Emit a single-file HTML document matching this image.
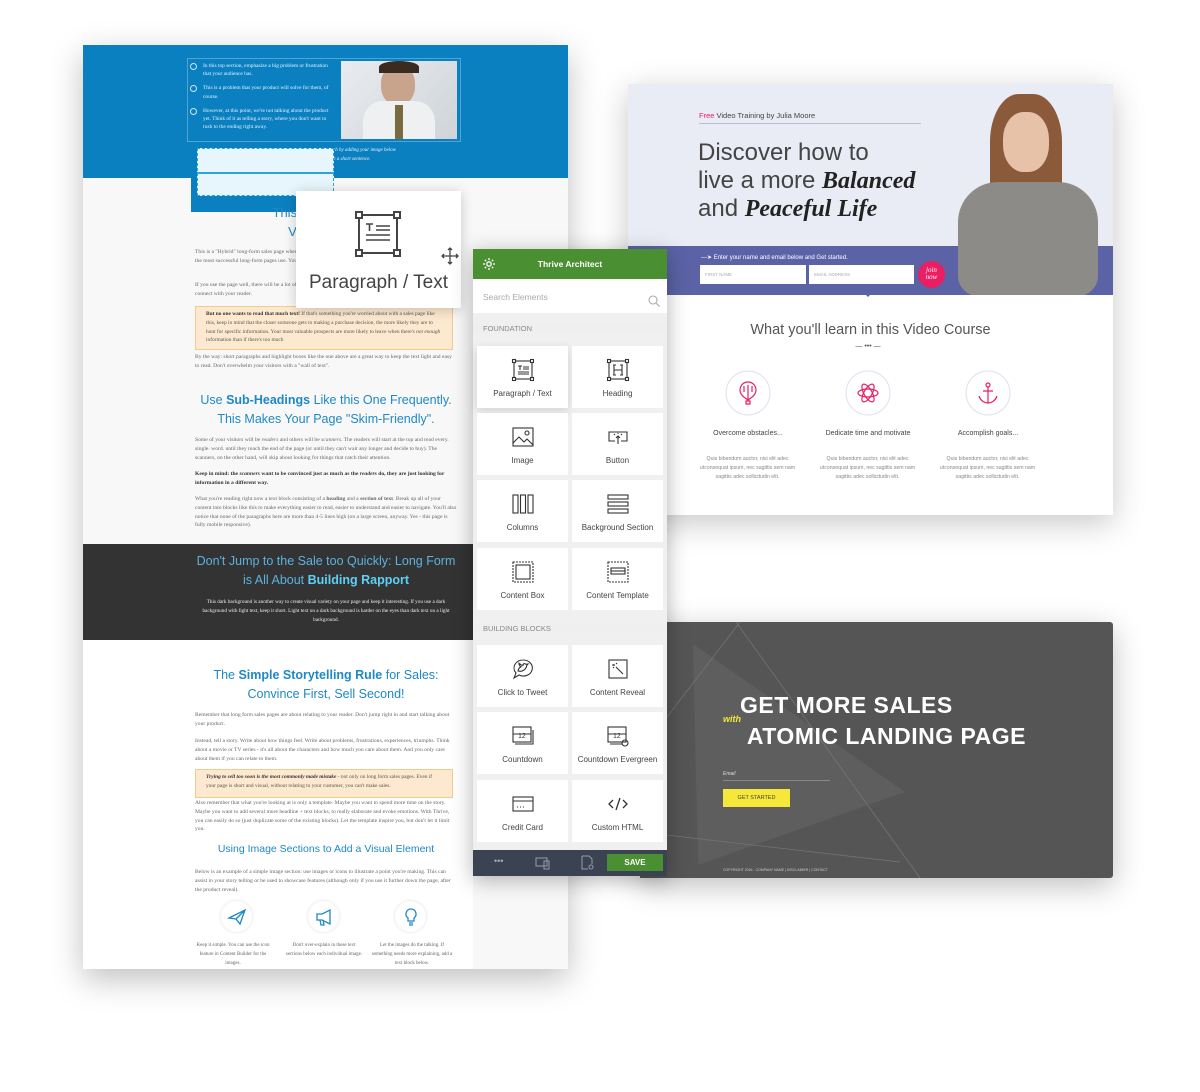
<!DOCTYPE html>
<html><head><meta charset="utf-8"><style>
*{margin:0;padding:0;box-sizing:border-box}
body{width:1200px;height:1092px;background:#fff;position:relative;overflow:hidden;font-family:"Liberation Sans",sans-serif}
.a{position:absolute}
.serif{font-family:"Liberation Serif",serif}
.p{font-family:"Liberation Serif",serif;font-size:5.6px;line-height:8.8px;color:#666;position:absolute;left:195px;width:262px}
.h{position:absolute;left:195px;width:262px;text-align:center;color:#1e88c7;font-size:12.5px;line-height:19px}
.h b{font-weight:bold}
.box{position:absolute;left:195px;width:258px;background:#fde9cf;border:1px solid #f5c98c;font-family:"Liberation Serif",serif;font-size:5.4px;line-height:8.8px;color:#555;padding:3px 10px}
.tile{position:absolute;width:91px;height:62px;background:#fff;text-align:center;font-size:8px;color:#444}
.tile span{position:absolute;left:0;right:0;bottom:10px}
.tile svg{position:absolute;left:50%;top:12px;margin-left:-12px}
.lbl{position:absolute;left:473px;width:194px;background:#efefef;font-size:7.5px;color:#888;padding-left:10px}
</style></head><body>

<!-- LEFT PAGE -->
<div class="a" style="left:83px;top:45px;width:485px;height:924px;background:#f8f8f8;box-shadow:0 10px 30px rgba(0,0,0,.25)"></div>
<div class="a" style="left:83px;top:45px;width:485px;height:133px;background:#0b80c1"></div>
<div class="a" style="left:187px;top:58px;width:274px;height:84px;border:1px solid #4fa3d6"></div>
<div class="a serif" style="left:190px;top:62px;width:140px;color:#e6f1fa;font-size:5.4px;line-height:8.2px">
<div style="padding-left:13px;position:relative"><span style="position:absolute;left:0;top:1px;width:7px;height:7px;border:1px solid #cfe6f5;border-radius:50%"></span>In this top section, emphasize a big problem or frustration that your audience has.</div>
<div style="padding-left:13px;position:relative;margin-top:6px"><span style="position:absolute;left:0;top:1px;width:7px;height:7px;border:1px solid #cfe6f5;border-radius:50%"></span>This is a problem that your product will solve for them, of course.</div>
<div style="padding-left:13px;position:relative;margin-top:6px"><span style="position:absolute;left:0;top:1px;width:7px;height:7px;border:1px solid #cfe6f5;border-radius:50%"></span>However, at this point, we're not talking about the product yet. Think of it as telling a story, where you don't want to rush to the ending right away.</div>
</div>
<div class="a" style="left:341px;top:61px;width:116px;height:78px;background:linear-gradient(135deg,#e9ecef,#cfd4d9);overflow:hidden">
<div class="a" style="left:40px;top:4px;width:34px;height:40px;border-radius:45%;background:#c9a48c"></div>
<div class="a" style="left:22px;top:40px;width:72px;height:40px;background:#eef0f2;border-radius:20px 20px 0 0"></div>
<div class="a" style="left:54px;top:44px;width:8px;height:34px;background:#7a6a40"></div>
<div class="a" style="left:38px;top:0;width:40px;height:12px;background:#3a2a20;border-radius:50% 50% 0 0"></div>
</div>
<div class="a serif" style="left:333px;top:147px;color:#e6f1fa;font-size:5px;line-height:8.5px;font-style:italic">ch by adding your image below<br>h a short sentence.</div>
<div class="a" style="left:191px;top:148px;width:142px;height:64px;background:#0b80c1"></div>
<div class="a" style="left:197px;top:148px;width:137px;height:48px;background:#e7f5fc;border:1px dashed #2ea3e0"></div>
<div class="a" style="left:197px;top:172px;width:137px;height:2px;background:#2ea3e0"></div>

<div class="h" style="top:203px;font-size:13px">This Sub-Headline<br>Visitor Wants</div>
<div class="p" style="top:248px">This is a "Hybrid" long-form sales page where there are large blocks of text combined with some visual aspects that the most successful long-form pages use. You'll still want to arouse the reader's curiosity, so they keep reading.</div>
<div class="p" style="top:281px">If you use the page well, there will be a lot of reading involved. This gives you the opportunity to tell a story, connect with your reader.</div>
<div class="box" style="top:306px;height:44px"><b style="color:#333">But no one wants to read that much text!</b> If that's something you're worried about with a sales page like this, keep in mind that the closer someone gets to making a purchase decision, the more likely they are to hunt for specific information. Your most valuable prospects are more likely to leave when there's <i>not enough</i> information than if there's too much</div>
<div class="p" style="top:353px">By the way: short paragraphs and highlight boxes like the one above are a great way to keep the text light and easy to read. Don't overwhelm your visitors with a "wall of text".</div>
<div class="h" style="top:391px">Use <b>Sub-Headings</b> Like this One Frequently.<br>This Makes Your Page "Skim-Friendly".</div>
<div class="p" style="top:436px">Some of your visitors will be <i>readers</i> and others will be <i>scanners</i>. The readers will start at the top and read every. single. word. until they reach the end of the page (or until they can't wait any longer and decide to buy). The scanners, on the other hand, will skip about looking for things that catch their attention.</div>
<div class="p" style="top:470px;color:#333;font-weight:bold">Keep in mind: the <i>scanners</i> want to be convinced just as much as the <i>readers</i> do, they are just looking for information in a different way.</div>
<div class="p" style="top:495px">What you're reading right now a text block consisting of a <b>heading</b> and a <b>section of text</b>. Break up all of your content into blocks like this to make everything easier to read, easier to understand and easier to navigate. You'll also notice that none of the paragraphs here are more than 4-5 lines high (on a large screen, anyway. Yes - this page is fully mobile responsive).</div>
<div class="a" style="left:83px;top:544px;width:390px;height:96px;background:#333"></div>
<div class="h" style="top:552px;color:#5bb3e0;font-size:12.5px">Don't Jump to the Sale too Quickly: Long Form<br>is All About <b style="color:#5fd0f5">Building Rapport</b></div>
<div class="p" style="top:598px;color:#eee;text-align:center;font-size:5.2px">This dark background is another way to create visual variety on your page and keep it interesting. If you use a dark background with light text, keep it short. Light text on a dark background is harder on the eyes than dark text on a light background.</div>
<div class="a" style="left:83px;top:640px;width:390px;height:329px;background:#fff"></div>
<div class="h" style="top:666px">The <b>Simple Storytelling Rule</b> for Sales:<br>Convince First, Sell Second!</div>
<div class="p" style="top:711px">Remember that long form sales pages are about relating to your reader. Don't jump right in and start talking about your product.</div>
<div class="p" style="top:737px">Instead, tell a story. Write about how things feel. Write about problems, frustrations, experiences, triumphs. Think about a movie or TV series - it's all about the characters and how much you care about them. And you only care about them if you can relate to them.</div>
<div class="box" style="top:769px;height:29px"><b style="color:#333"><i>Trying to sell too soon is the most commonly made mistake</i></b> - not only on long form sales pages. Even if your page is short and visual, without relating to your customer, you can't make sales.</div>
<div class="p" style="top:799px">Also remember that what you're looking at is only a template. Maybe you want to spend more time on the story. Maybe you want to add several more headline + text blocks, to really elaborate and evoke emotions. With Thrive, you can easily do so (just duplicate some of the existing blocks). Let the template inspire you, but don't let it limit you.</div>
<div class="h" style="top:840px;font-size:10.5px">Using Image Sections to Add a Visual Element</div>
<div class="p" style="top:868px">Below is an example of a simple image section: use images or icons to illustrate a point you're making. This can assist in your story telling or be used to showcase features (although only if you use it further down the page, after the product reveal).</div>
<div class="a" style="left:221px;top:901px;width:31px;height:31px;border-radius:50%;background:#fff;box-shadow:0 0 3px #ddd"></div>
<div class="a" style="left:308px;top:901px;width:31px;height:31px;border-radius:50%;background:#fff;box-shadow:0 0 3px #ddd"></div>
<div class="a" style="left:395px;top:901px;width:31px;height:31px;border-radius:50%;background:#fff;box-shadow:0 0 3px #ddd"></div>
<svg class="a" style="left:226px;top:906px" width="22" height="22" viewBox="0 0 22 22" fill="none" stroke="#1e88c7" stroke-width="1.3"><path d="M3 12L19 4 14 18 10 13z M10 13L19 4"/></svg>
<svg class="a" style="left:313px;top:906px" width="22" height="22" viewBox="0 0 22 22" fill="none" stroke="#1e88c7" stroke-width="1.3"><path d="M4 8h5l8-4v14l-8-4H4z M7 14l1 5h3l-1-5"/></svg>
<svg class="a" style="left:400px;top:906px" width="22" height="22" viewBox="0 0 22 22" fill="none" stroke="#1e88c7" stroke-width="1.3"><path d="M11 3a5 5 0 0 0-3 9v3h6v-3a5 5 0 0 0-3-9z M9 17h4 M9 19h4"/></svg>
<div class="p" style="top:942px;left:193px;width:80px;text-align:center;font-size:5px">Keep it simple. You can use the icon feature in Content Builder for the images.</div>
<div class="p" style="top:942px;left:284px;width:80px;text-align:center;font-size:5px">Don't over-explain in these text sections below each individual image.</div>
<div class="p" style="top:942px;left:370px;width:84px;text-align:center;font-size:5px">Let the images do the talking. If something needs more explaining, add a text block below.</div>

<!-- Paragraph/Text floating card -->
<div class="a" style="left:296px;top:191px;width:165px;height:117px;background:#fff;box-shadow:0 2px 12px rgba(0,0,0,.2)"></div>
<svg class="a" style="left:355px;top:211px" width="46" height="46" viewBox="0 0 46 46" fill="none" stroke="#444" stroke-width="2"><rect x="4" y="4" width="38" height="38"/><rect x="1" y="1" width="6" height="6" fill="#fff"/><rect x="39" y="1" width="6" height="6" fill="#fff"/><rect x="1" y="39" width="6" height="6" fill="#fff"/><rect x="39" y="39" width="6" height="6" fill="#fff"/><path d="M11 13h7M14.5 13v7M21 15h14M21 19h14M11 24h24M11 29h24" stroke-width="1.6"/></svg>
<svg class="a" style="left:441px;top:247px" width="18" height="18" viewBox="0 0 18 18" fill="none" stroke="#444" stroke-width="1.3"><path d="M9 1v16M1 9h16M7 3l2-2 2 2M7 15l2 2 2-2M3 7l-2 2 2 2M15 7l2 2-2 2"/></svg>
<div class="a" style="left:296px;top:272px;width:165px;text-align:center;font-size:19px;color:#444">Paragraph / Text</div>

<!-- RIGHT TOP CARD -->
<div class="a" style="left:628px;top:84px;width:485px;height:431px;background:#fff;box-shadow:0 8px 30px rgba(0,0,0,.22)"></div>
<div class="a" style="left:628px;top:84px;width:485px;height:163px;background:#eaecf5"></div>
<div class="a" style="left:628px;top:246px;width:485px;height:49px;background:#5b63a6"></div>
<div class="a" style="left:699px;top:111px;font-size:7.5px;color:#444"><span style="color:#e91e63">Free</span> Video Training by Julia Moore</div>
<div class="a" style="left:699px;top:123px;width:222px;height:1px;background:#b9bdd2"></div>
<div class="a" style="left:698px;top:139px;font-size:24px;line-height:28px;color:#444;font-weight:300">Discover how to<br>live a more <i style="font-family:'Liberation Serif',serif;color:#222;font-weight:bold">Balanced</i><br>and <i style="font-family:'Liberation Serif',serif;color:#222;font-weight:bold">Peaceful Life</i></div>
<!-- woman -->
<div class="a" style="left:948px;top:92px;width:165px;height:155px;overflow:hidden">
<div class="a" style="left:42px;top:2px;width:72px;height:120px;background:#8a5a3a;border-radius:40% 40% 20% 20%"></div>
<div class="a" style="left:55px;top:20px;width:46px;height:60px;background:#e8c2a8;border-radius:45%"></div>
<div class="a" style="left:10px;top:90px;width:140px;height:80px;background:#8d8b88;border-radius:40px 40px 0 0"></div>
</div>
<div class="a" style="left:958px;top:246px;width:150px;height:49px;overflow:hidden"><div class="a" style="left:0;top:-20px;width:140px;height:70px;background:#8d8b88;border-radius:0 0 20px 20px"></div></div>
<div class="a" style="left:701px;top:254px;font-size:6px;color:#fff">—➤ Enter your name and email below and Get started.</div>
<div class="a" style="left:700px;top:265px;width:106px;height:19px;background:#fff;font-size:4.5px;color:#aaa;padding:7px 5px">FIRST NAME</div>
<div class="a" style="left:809px;top:265px;width:105px;height:19px;background:#fff;font-size:4.5px;color:#aaa;padding:7px 5px">EMAIL ADDRESS</div>
<div class="a" style="left:918px;top:261px;width:27px;height:27px;border-radius:50%;background:#e91e63;color:#fff;font-size:7px;font-style:italic;text-align:center;line-height:7px;padding-top:6px;font-family:'Liberation Serif',serif">join<br>now</div>
<div class="a" style="left:865px;top:294px;width:0;height:0;border:3px solid transparent;border-top-color:#5b63a6"></div>
<div class="a" style="left:628px;top:322px;width:485px;text-align:center;font-size:14.5px;color:#555;font-weight:300">What you'll learn in this Video Course</div>
<div class="a" style="left:851px;top:345px;width:34px;text-align:center;font-size:7px;color:#555;line-height:4px">— ••• —</div>
<svg class="a" style="left:725px;top:370px" width="520" height="50"><g fill="#fff" stroke="#dde0ee"><circle cx="23" cy="23" r="22"/><circle cx="143" cy="23" r="22"/><circle cx="263" cy="23" r="22"/></g><g fill="none" stroke="#e91e63" stroke-width="1.2"><path d="M15 20a8 8 0 0 1 16 0c0 5-5 8-8 10-3-2-8-5-8-10zM19 16v6M23 15v15M27 16v6M21 31h4v3h-4z"/><ellipse cx="143" cy="23" rx="10" ry="4"/><ellipse cx="143" cy="23" rx="10" ry="4" transform="rotate(60 143 23)"/><ellipse cx="143" cy="23" rx="10" ry="4" transform="rotate(-60 143 23)"/><circle cx="263" cy="15" r="2"/><path d="M263 17v16M258 21h10M254 26c2 6 7 7 9 7s7-1 9-7"/></g></svg>
<div class="a" style="left:688px;top:430px;width:120px;text-align:center;font-size:7px;color:#444">Overcome obstacles...</div>
<div class="a" style="left:808px;top:430px;width:120px;text-align:center;font-size:7px;color:#444">Dedicate time and motivate</div>
<div class="a" style="left:928px;top:430px;width:120px;text-align:center;font-size:7px;color:#444">Accomplish goals...</div>
<div class="a" style="left:695px;top:455px;width:105px;text-align:center;font-size:5.2px;line-height:9px;color:#888">Quis bibendum auctor, nisi elit adec utconsequat ipsum, nec sagittis sem nam sagittis adec sollicitudin elit.</div>
<div class="a" style="left:815px;top:455px;width:105px;text-align:center;font-size:5.2px;line-height:9px;color:#888">Quis bibendum auctor, nisi elit adec utconsequat ipsum, nec sagittis sem nam sagittis adec sollicitudin elit.</div>
<div class="a" style="left:935px;top:455px;width:105px;text-align:center;font-size:5.2px;line-height:9px;color:#888">Quis bibendum auctor, nisi elit adec utconsequat ipsum, nec sagittis sem nam sagittis adec sollicitudin elit.</div>

<!-- BOTTOM DARK CARD -->
<div class="a" style="left:640px;top:622px;width:473px;height:256px;background:#555;box-shadow:0 8px 30px rgba(0,0,0,.25);overflow:hidden;border-radius:0 3px 3px 0">
<svg class="a" style="left:0;top:0" width="473" height="256"><polygon points="53,22 265,170 58,243" fill="#5e5e5e"/><g stroke="#777" stroke-width=".7" fill="none"><path d="M96,0 L280,256"/><path d="M0,130 L100,0"/><path d="M0,210 L260,240"/></g></svg>
</div>
<div class="a" style="left:740px;top:690px;font-size:23px;font-weight:bold;color:#fff;letter-spacing:.5px;line-height:31px">GET MORE SALES<br>&nbsp;ATOMIC LANDING PAGE</div>
<div class="a" style="left:723px;top:714px;font-size:9px;font-style:italic;font-weight:bold;color:#f5e83a">with</div>
<div class="a" style="left:723px;top:771px;font-size:5px;color:#ddd;font-style:italic">Email</div>
<div class="a" style="left:723px;top:780px;width:107px;height:1px;background:#888"></div>
<div class="a" style="left:723px;top:789px;width:67px;height:18px;background:#f5e83a;font-size:5.5px;color:#444;text-align:center;line-height:18px">GET STARTED</div>
<div class="a" style="left:723px;top:868px;font-size:3.5px;color:#ccc">COPYRIGHT 2016 - COMPANY NAME | DISCLAIMER | CONTACT</div>

<!-- PANEL -->
<div class="a" style="left:473px;top:249px;width:194px;height:627px;background:#f0f0f0;box-shadow:0 4px 20px rgba(0,0,0,.3)"></div>
<div class="a" style="left:473px;top:249px;width:194px;height:30px;background:#4a8f32;color:#fff;font-size:8.5px;font-weight:bold;text-align:center;line-height:30px">Thrive Architect</div>
<svg class="a" style="left:482px;top:257px" width="14" height="14" viewBox="0 0 14 14" fill="none" stroke="#fff" stroke-width="1.3"><circle cx="7" cy="7" r="2.2"/><path d="M7 1v2M7 11v2M1 7h2M11 7h2M2.8 2.8l1.4 1.4M9.8 9.8l1.4 1.4M2.8 11.2l1.4-1.4M9.8 4.2l1.4-1.4"/></svg>
<div class="a" style="left:473px;top:279px;width:194px;height:34px;background:#fff;font-size:8.5px;color:#aaa;padding:13px 10px">Search Elements</div>
<svg class="a" style="left:648px;top:295px" width="12" height="12" fill="none" stroke="#aaa" stroke-width="1.1"><circle cx="5" cy="5" r="4"/><path d="M8 8l3.5 3.5"/></svg>
<div class="lbl" style="top:324px">FOUNDATION</div>
<div class="lbl" style="top:624px">BUILDING BLOCKS</div>

<div class="tile" style="left:477px;top:346px;box-shadow:0 3px 10px rgba(0,0,0,.12)"><svg width="24" height="24" viewBox="0 0 24 24" fill="none" stroke="#333" stroke-width="1.1"><rect x="3" y="3" width="18" height="18"/><rect x="1.5" y="1.5" width="3" height="3" fill="#fff"/><rect x="19.5" y="1.5" width="3" height="3" fill="#fff"/><rect x="1.5" y="19.5" width="3" height="3" fill="#fff"/><rect x="19.5" y="19.5" width="3" height="3" fill="#fff"/><path d="M7 8h4M9 8v4M12 9h6M12 11h6M7 14h11M7 16h11"/></svg><span>Paragraph / Text</span></div>
<div class="tile" style="left:572px;top:346px"><svg width="24" height="24" viewBox="0 0 24 24" fill="none" stroke="#333" stroke-width="1.1"><rect x="3" y="3" width="18" height="18"/><rect x="1.5" y="1.5" width="3" height="3" fill="#fff"/><rect x="19.5" y="1.5" width="3" height="3" fill="#fff"/><rect x="1.5" y="19.5" width="3" height="3" fill="#fff"/><rect x="19.5" y="19.5" width="3" height="3" fill="#fff"/><path d="M8 7v10M16 7v10M8 12h8M7 7h3M14 7h3M7 17h3M14 17h3"/></svg><span>Heading</span></div>
<div class="tile" style="left:477px;top:413px"><svg width="24" height="24" viewBox="0 0 24 24" fill="none" stroke="#333" stroke-width="1.1"><rect x="2" y="3" width="20" height="18"/><path d="M2 18l6-6 5 5 3-3 6 6"/><circle cx="16" cy="8" r="2"/></svg><span>Image</span></div>
<div class="tile" style="left:572px;top:413px"><svg width="24" height="24" viewBox="0 0 24 24" fill="none" stroke="#333" stroke-width="1.1"><path d="M9 16H3V7h18v9h-6"/><path d="M12 11v8M10 13l2-2 2 2M9 10l-1-1M15 10l1-1M12 9V8"/></svg><span>Button</span></div>
<div class="tile" style="left:477px;top:480px"><svg width="24" height="24" viewBox="0 0 24 24" fill="none" stroke="#333" stroke-width="1.1"><rect x="2" y="3" width="5" height="18"/><rect x="9.5" y="3" width="5" height="18"/><rect x="17" y="3" width="5" height="18"/></svg><span>Columns</span></div>
<div class="tile" style="left:572px;top:480px"><svg width="24" height="24" viewBox="0 0 24 24" fill="none" stroke="#333" stroke-width="1.1"><rect x="2" y="3" width="20" height="4"/><rect x="2" y="10" width="20" height="4"/><rect x="2" y="17" width="20" height="4"/></svg><span>Background Section</span></div>
<div class="tile" style="left:477px;top:548px"><svg width="24" height="24" viewBox="0 0 24 24" fill="none" stroke="#333" stroke-width="1.1"><rect x="2" y="2" width="20" height="20" stroke-dasharray="2 1"/><rect x="5" y="5" width="14" height="14"/></svg><span>Content Box</span></div>
<div class="tile" style="left:572px;top:548px"><svg width="24" height="24" viewBox="0 0 24 24" fill="none" stroke="#333" stroke-width="1.1"><rect x="2" y="2" width="20" height="20" stroke-dasharray="2 1"/><rect x="5" y="8" width="14" height="6"/><path d="M5 11h14"/></svg><span>Content Template</span></div>
<div class="tile" style="left:477px;top:645px"><svg width="24" height="24" viewBox="0 0 24 24" fill="none" stroke="#333" stroke-width="1.1"><path d="M12 3a9 8 0 1 1-4 15l-5 3 2-5A9 8 0 0 1 12 3z"/><path d="M7 14c4 1 8-1 9-6l1-1-2 .3c-1-1-3-1-3 1-2 0-3-1-4-2 0 2 1 3 2 3.5-1 .2-2 1-3 4z"/></svg><span>Click to Tweet</span></div>
<div class="tile" style="left:572px;top:645px"><svg width="24" height="24" viewBox="0 0 24 24" fill="none" stroke="#333" stroke-width="1.1"><rect x="3" y="3" width="18" height="18"/><path d="M10 10l7 7M8 7v2M6 8h2M11 6l-1 1M7 11l1-1"/></svg><span>Content Reveal</span></div>
<div class="tile" style="left:477px;top:712px"><svg width="24" height="24" viewBox="0 0 24 24" fill="none" stroke="#333" stroke-width="1.1"><rect x="2" y="3" width="18" height="15"/><path d="M4 20h18V6M2 10h18"/><text x="7" y="14" font-size="7" fill="#333" stroke="none" font-family="Liberation Sans">12</text></svg><span>Countdown</span></div>
<div class="tile" style="left:572px;top:712px"><svg width="24" height="24" viewBox="0 0 24 24" fill="none" stroke="#333" stroke-width="1.1"><rect x="2" y="3" width="18" height="15"/><path d="M4 20h12M2 10h18"/><circle cx="19" cy="19" r="3"/><text x="7" y="14" font-size="7" fill="#333" stroke="none" font-family="Liberation Sans">12</text></svg><span>Countdown Evergreen</span></div>
<div class="tile" style="left:477px;top:780px"><svg width="24" height="24" viewBox="0 0 24 24" fill="none" stroke="#333" stroke-width="1.1"><rect x="2" y="5" width="20" height="14"/><path d="M2 9h20M6 15h1M9 15h1M12 15h1"/></svg><span>Credit Card</span></div>
<div class="tile" style="left:572px;top:780px"><svg width="24" height="24" viewBox="0 0 24 24" fill="none" stroke="#333" stroke-width="1.3"><path d="M7 8l-4 4 4 4M17 8l4 4-4 4M14 6l-4 12"/></svg><span>Custom HTML</span></div>

<div class="a" style="left:473px;top:850px;width:194px;height:26px;background:#3b4352"></div>
<div class="a" style="left:494px;top:856px;color:#aab;font-size:9px">•••</div>
<svg class="a" style="left:535px;top:856px" width="16" height="14" fill="none" stroke="#99a" stroke-width="1"><rect x="1" y="2" width="11" height="8"/><rect x="9" y="5" width="5" height="8"/></svg>
<svg class="a" style="left:580px;top:855px" width="14" height="15" fill="none" stroke="#99a" stroke-width="1"><path d="M2 1h7l3 3v5M2 1v13h6"/><circle cx="11" cy="12" r="2"/></svg>
<div class="a" style="left:607px;top:854px;width:56px;height:17px;background:#4a8f32;color:#fff;font-size:8px;font-weight:bold;text-align:center;line-height:17px">SAVE</div>
</body></html>
